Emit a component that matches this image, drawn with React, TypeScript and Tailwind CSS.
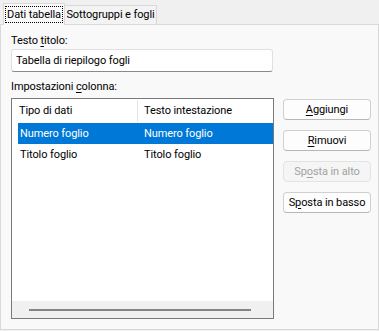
import type { ReactNode } from 'react'

const font = "font-['Roboto','Liberation_Sans',sans-serif] text-[11px] tracking-[-0.1px] leading-[16px] text-black"

function U({ children }: { children: ReactNode }) {
  return <span className="underline decoration-1 underline-offset-[1.5px]">{children}</span>
}

function Btn({ children, disabled }: { children: ReactNode; disabled?: boolean }) {
  return (
    <button
      type="button"
      disabled={disabled}
      className={
        disabled
          ? 'flex h-[21px] w-[88px] items-center justify-center rounded-[4px] border border-[#e3e3e3] bg-[#f5f5f5] text-[#a2a2a2]'
          : 'flex h-[21px] w-[88px] items-center justify-center rounded-[4px] border border-[#d0d0d0] border-b-[#b7b7b7] bg-[#fdfdfd] text-black'
      }
    >
      {children}
    </button>
  )
}

const rows = [
  { tipo: 'Numero foglio', testo: 'Numero foglio', selected: true },
  { tipo: 'Titolo foglio', testo: 'Titolo foglio', selected: false },
]

export default function App() {
  return (
    <div className={`flex h-[331px] w-[379px] flex-col bg-[#f0f0f0] ${font}`}>
      {/* Schede */}
      <div className="flex h-[24px] items-end pl-[3px]">
        <div className="relative z-10 -mb-px flex h-[22px] w-[62px] items-start justify-center border border-b-0 border-[#d9d9d9] bg-[#f9f9f9] pt-[2px]">
          <span className="border border-dotted border-black px-[1px] leading-[15px]">Dati tabella</span>
        </div>
        <div className="flex h-[19px] w-[92px] items-center justify-center border border-b-0 border-l-0 border-[#d9d9d9] bg-[#f3f3f3]">
          Sottogruppi e fogli
        </div>
      </div>

      {/* Pannello */}
      <div className="h-[306px] border border-[#d9d9d9] bg-[#f9f9f9] pl-[10px] pt-[8px]">
        <div className="h-[16px]">
          Testo <U>t</U>itolo:
        </div>
        <div className="flex h-[23px] w-[262px] items-center rounded-[3px] border border-[#e0e0e0] border-b-[#8a8a8a] bg-white pl-[4px]">
          Tabella di riepilogo fogli
        </div>
        <div className="mt-[7px] h-[16px]">
          Impostazioni <U>c</U>olonna:
        </div>

        <div className="mt-[3px] flex items-start">
          <div className="flex h-[221px] w-[263px] flex-col border border-[#7a7a7a] bg-white">
            <div className="flex h-[24px] shrink-0 items-center pl-[6px]">
              <div className="w-[119px] pl-[1px]">Tipo di dati</div>
              <div className="h-[22px] w-px bg-[#e5e5e5]" />
              <div className="pl-[6px]">Testo intestazione</div>
            </div>
            {rows.map((r) => (
              <div key={r.tipo} className="flex h-[21px] shrink-0 items-center pl-[6px]">
                <div
                  className={`flex h-full flex-1 items-center ${r.selected ? 'bg-[#0078d7] text-white' : ''}`}
                >
                  <div className="w-[124px] pl-[2px]">{r.tipo}</div>
                  <div className="pl-[2px]">{r.testo}</div>
                </div>
              </div>
            ))}
            <div className="flex-1" />
            <div className="flex h-[17px] shrink-0 items-center bg-[#f0f0f0] pl-[17px]">
              <div className="h-[2px] w-[222px] bg-[#858585]" />
            </div>
          </div>

          <div className="ml-[9px] mt-[1px] flex flex-col gap-[10px]">
            <Btn>
              <U>A</U>ggiungi
            </Btn>
            <Btn>
              <U>R</U>imuovi
            </Btn>
            <Btn disabled>
              Sp<U>o</U>sta in alto
            </Btn>
            <Btn>
              S<U>p</U>osta in basso
            </Btn>
          </div>
        </div>
      </div>
    </div>
  )
}
